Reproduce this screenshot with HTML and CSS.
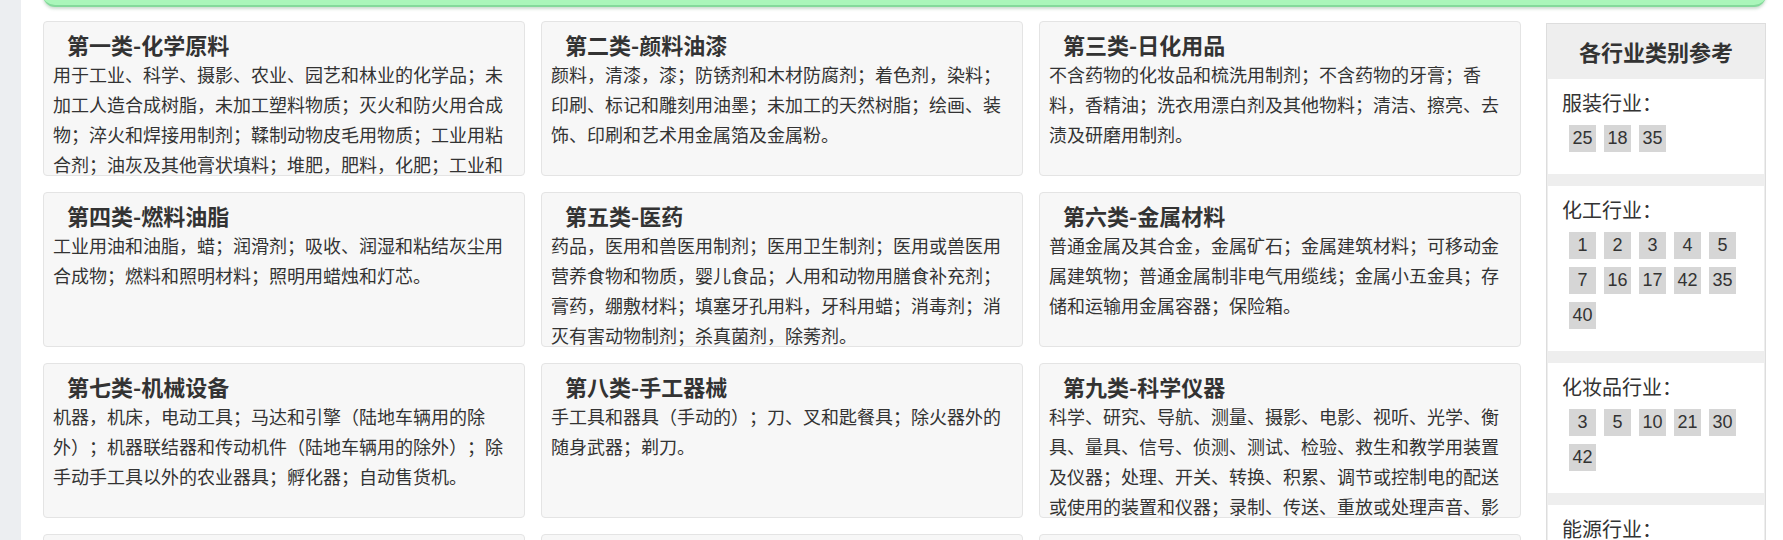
FILE: index.html
```html
<!DOCTYPE html>
<html lang="zh-CN">
<head>
<meta charset="utf-8">
<title>商标分类</title>
<link rel="stylesheet" href="styles.css">
</head>
<body>
<div class="page">
  <aside class="rail"></aside>
  <main class="main">
    <div class="banner"></div>
    <div class="content">
      <section class="grid">
        <article class="card">
          <h3 class="card-title">第一类-化学原料</h3>
          <p class="card-text">用于工业、科学、摄影、农业、园艺和林业的化学品；未加工人造合成树脂，未加工塑料物质；灭火和防火用合成物；淬火和焊接用制剂；鞣制动物皮毛用物质；工业用粘合剂；油灰及其他膏状填料；堆肥，肥料，化肥；工业和科学用生物制剂。</p>
        </article>
        <article class="card">
          <h3 class="card-title">第二类-颜料油漆</h3>
          <p class="card-text">颜料，清漆，漆；防锈剂和木材防腐剂；着色剂，染料；印刷、标记和雕刻用油墨；未加工的天然树脂；绘画、装饰、印刷和艺术用金属箔及金属粉。</p>
        </article>
        <article class="card">
          <h3 class="card-title">第三类-日化用品</h3>
          <p class="card-text">不含药物的化妆品和梳洗用制剂；不含药物的牙膏；香料，香精油；洗衣用漂白剂及其他物料；清洁、擦亮、去渍及研磨用制剂。</p>
        </article>
        <article class="card">
          <h3 class="card-title">第四类-燃料油脂</h3>
          <p class="card-text">工业用油和油脂，蜡；润滑剂；吸收、润湿和粘结灰尘用合成物；燃料和照明材料；照明用蜡烛和灯芯。</p>
        </article>
        <article class="card">
          <h3 class="card-title">第五类-医药</h3>
          <p class="card-text">药品，医用和兽医用制剂；医用卫生制剂；医用或兽医用营养食物和物质，婴儿食品；人用和动物用膳食补充剂；膏药，绷敷材料；填塞牙孔用料，牙科用蜡；消毒剂；消灭有害动物制剂；杀真菌剂，除莠剂。</p>
        </article>
        <article class="card">
          <h3 class="card-title">第六类-金属材料</h3>
          <p class="card-text">普通金属及其合金，金属矿石；金属建筑材料；可移动金属建筑物；普通金属制非电气用缆线；金属小五金具；存储和运输用金属容器；保险箱。</p>
        </article>
        <article class="card">
          <h3 class="card-title">第七类-机械设备</h3>
          <p class="card-text">机器，机床，电动工具；马达和引擎（陆地车辆用的除外）；机器联结器和传动机件（陆地车辆用的除外）；除手动手工具以外的农业器具；孵化器；自动售货机。</p>
        </article>
        <article class="card">
          <h3 class="card-title">第八类-手工器械</h3>
          <p class="card-text">手工具和器具（手动的）；刀、叉和匙餐具；除火器外的随身武器；剃刀。</p>
        </article>
        <article class="card">
          <h3 class="card-title">第九类-科学仪器</h3>
          <p class="card-text">科学、研究、导航、测量、摄影、电影、视听、光学、衡具、量具、信号、侦测、测试、检验、救生和教学用装置及仪器；处理、开关、转换、积累、调节或控制电的配送或使用的装置和仪器；录制、传送、重放或处理声音、影像或数据的装置和仪器；已录制和可下载的媒体，计算机软件。</p>
        </article>
        <article class="card">
          <h3 class="card-title">第十类-医疗器械</h3>
          <p class="card-text">外科、医疗、牙科和兽医用仪器及器械；假肢，假眼和假牙；矫形用品；缝合用材料。</p>
        </article>
        <article class="card">
          <h3 class="card-title">第十一类-灯具空调</h3>
          <p class="card-text">照明、加热、冷却、蒸汽发生、烹饪、干燥、通风、供水以及卫生用装置和设备。</p>
        </article>
        <article class="card">
          <h3 class="card-title">第十二类-运输工具</h3>
          <p class="card-text">运载工具；陆运、空运或水运用装置。</p>
        </article>
      </section>

      <aside class="ref">
        <h2 class="ref-title">各行业类别参考</h2>
        <div class="ref-section">
          <div class="ref-label">服装行业：</div>
          <div class="tags">
            <span class="tag">25</span><span class="tag">18</span><span class="tag">35</span>
          </div>
        </div>
        <div class="ref-section">
          <div class="ref-label">化工行业：</div>
          <div class="tags">
            <span class="tag">1</span><span class="tag">2</span><span class="tag">3</span><span class="tag">4</span><span class="tag">5</span>
            <span class="tag">7</span><span class="tag">16</span><span class="tag">17</span><span class="tag">42</span><span class="tag">35</span>
            <span class="tag">40</span>
          </div>
        </div>
        <div class="ref-section">
          <div class="ref-label">化妆品行业：</div>
          <div class="tags">
            <span class="tag">3</span><span class="tag">5</span><span class="tag">10</span><span class="tag">21</span><span class="tag">30</span>
            <span class="tag">42</span>
          </div>
        </div>
        <div class="ref-section">
          <div class="ref-label">能源行业：</div>
          <div class="tags">
            <span class="tag">4</span><span class="tag">7</span><span class="tag">9</span><span class="tag">11</span><span class="tag">37</span>
          </div>
        </div>
      </aside>
    </div>
  </main>
</div>
</body>
</html>
```

FILE: styles.css
```css
html, body {
  margin: 0;
  padding: 0;
  background: #ffffff;
}

body {
  font-family: "Noto Sans CJK SC", "Liberation Sans", sans-serif;
  color: #333333;
  overflow: hidden;
  text-spacing-trim: space-all;
}

.page {
  display: flex;
  min-height: 540px;
}

.rail {
  width: 21px;
  flex: 0 0 21px;
  background: #eceef1;
}

.main {
  flex: 1 1 auto;
  padding: 0 17px 0 22px;
}

.banner {
  height: 40px;
  margin-top: -35px;
  background: #aaf6ba;
  border-bottom: 2px solid #84da9b;
  border-radius: 0 0 12px 12px;
  box-shadow: 0 2px 3px rgba(60, 120, 70, 0.25);
}

.content {
  display: flex;
  align-items: flex-start;
  gap: 25px;
  margin-top: 14px;
}

.grid {
  flex: 1 1 auto;
  display: grid;
  grid-template-columns: repeat(3, 1fr);
  column-gap: 16px;
  row-gap: 16px;
}

.card {
  box-sizing: border-box;
  height: 155px;
  overflow: hidden;
  background: #f7f7f7;
  border: 1px solid #e4e4e4;
  border-radius: 4px;
  padding: 7px 9px 0 9px;
}

.card-title {
  margin: 0;
  padding-left: 14px;
  font-size: 22px;
  line-height: 30px;
  font-weight: bold;
  color: #333333;
}

.card-text {
  margin: 0;
  font-size: 18px;
  line-height: 30px;
  color: #333333;
}

.ref {
  box-sizing: border-box;
  flex: 0 0 220px;
  width: 220px;
  margin-top: 2px;
  background: #eeeeee;
  border: 1px solid #dddddd;
}

.ref-title {
  margin: 0;
  height: 55px;
  line-height: 55px;
  text-align: center;
  font-size: 22px;
  font-weight: bold;
  color: #333333;
}

.ref-section {
  background: #ffffff;
  margin: 0 1px 12px 1px;
  padding: 12px 14px 22px 14px;
}

.ref-label {
  font-size: 20px;
  line-height: 24px;
  color: #333333;
}

.tags {
  display: flex;
  flex-wrap: wrap;
  gap: 8px;
  margin-top: 10px;
  padding-left: 7px;
}

.tag {
  display: inline-block;
  width: 27px;
  height: 27px;
  line-height: 27px;
  text-align: center;
  background: #d6d6d6;
  color: #333333;
  font-family: "Liberation Sans", Arial, sans-serif;
  font-size: 18px;
}
```
